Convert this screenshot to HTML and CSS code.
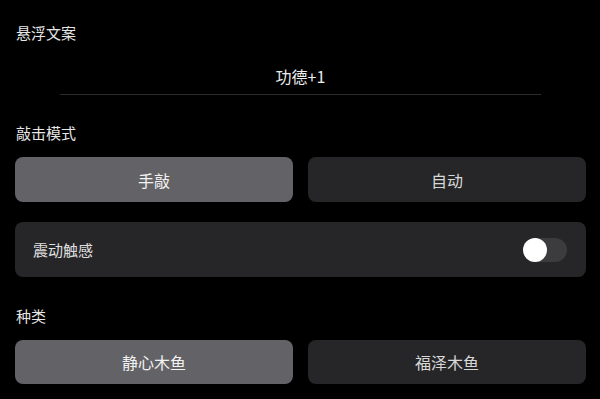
FILE: index.html
```html
<!DOCTYPE html>
<html lang="zh-CN">
<head>
<meta charset="utf-8">
<link rel="stylesheet" href="styles.css">
</head>
<body>
<div class="page">
  <div class="title t1">悬浮文案</div>
  <div class="field"><span class="field-text">功德+1</span></div>
  <div class="title t2">敲击模式</div>
  <div class="seg">
    <div class="opt active">手敲</div>
    <div class="opt">自动</div>
  </div>
  <div class="card">
    <span class="card-label">震动触感</span>
    <span class="switch"><span class="knob"></span></span>
  </div>
  <div class="title t3">种类</div>
  <div class="seg seg2">
    <div class="opt active">静心木鱼</div>
    <div class="opt">福泽木鱼</div>
  </div>
</div>
</body>
</html>
```
FILE: styles.css
```css
html, body {
  margin: 0;
  padding: 0;
  background: #000;
  width: 600px;
  height: 399px;
  overflow: hidden;
}
.page {
  padding: 22px 14px 0 15px;
  font-family: "Noto Sans CJK SC", "Noto Sans", sans-serif;
  color: #e4e4e4;
}
.title {
  font-size: 15px;
  line-height: 21px;
  padding-left: 1px;
  color: #e6e6e6;
}
.field {
  margin: 0 45px;
  padding: 22px 0 7px;
  border-bottom: 1px solid #2c2c2c;
  text-align: center;
  font-size: 16px;
  line-height: 22px;
  color: #ededed;
}
.t2 { margin-top: 27px; }
.seg {
  display: grid;
  grid-template-columns: 1fr 1fr;
  gap: 15px;
  margin-top: 14px;
}
.opt {
  height: 45px;
  border-radius: 8px;
  background: #262628;
  display: flex;
  align-items: center;
  justify-content: center;
  font-size: 16px;
  color: #d8d8d8;
}
.opt.active {
  background: #636266;
  color: #f2f2f2;
}
.card {
  margin-top: 20px;
  height: 55px;
  border-radius: 8px;
  background: #262628;
  display: flex;
  align-items: center;
  justify-content: space-between;
  padding: 0 19px 0 18px;
}
.card-label {
  font-size: 15px;
  color: #e0e0e0;
}
.switch {
  position: relative;
  width: 42px;
  height: 24px;
  border-radius: 12px;
  background: #3c3c3e;
}
.knob {
  position: absolute;
  left: -2px;
  top: 0;
  width: 24px;
  height: 24px;
  border-radius: 50%;
  background: #fff;
}
.t3 { margin-top: 28px; }
.seg2 .opt { height: 44px; }
```
